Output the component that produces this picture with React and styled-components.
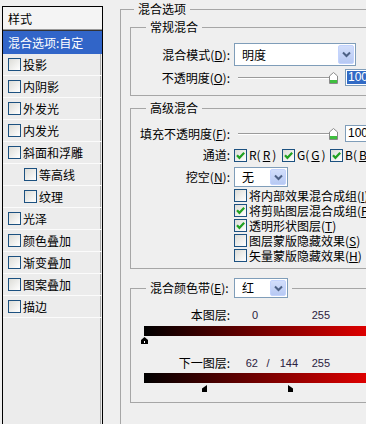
import styled, { createGlobalStyle } from 'styled-components';

const GlobalStyle = createGlobalStyle`
  html, body {
    margin: 0;
    padding: 0;
    overflow: hidden;
    background: #efefef;
  }
  body {
    font-family: "Noto Sans CJK SC", "Noto Sans", sans-serif;
    font-size: 12px;
    color: #000;
  }
  * { box-sizing: border-box; }
`;

const Page = styled.div`
  display: flex;
  align-items: flex-start;
  width: 366px;
  height: 424px;
  padding-left: 2px;
  overflow: hidden;
`;

/* ---------- left style list ---------- */

const Sidebar = styled.div`
  flex: none;
  width: 101px;
  height: 418px;
  margin-top: 6px;
  border: 1px solid #000;
  border-bottom: none;
  background: #ececec;
  box-shadow: inset -1px 0 0 #ececec, inset -2px 0 0 #a9a9a9;
  display: flex;
  flex-direction: column;
`;

const SidebarHeader = styled.div`
  height: 24px;
  padding-left: 5px;
  display: flex;
  align-items: center;
  background: #f4f4f4;
  border-bottom: 1px solid #333;
  box-shadow: inset 0 -1px 0 #9a9a9a;
  line-height: 14px;
`;

const SidebarSelected = styled.div`
  height: 23px;
  padding-left: 5px;
  display: flex;
  align-items: center;
  background: #3165c8;
  color: #fff;
  line-height: 14px;
`;

const SidebarRow = styled.div`
  height: 22px;
  padding-left: ${p => (p.$indent ? 21 : 5)}px;
  display: flex;
  align-items: center;
  gap: 2px;
  border-bottom: 1px solid #fbfbfb;
  line-height: 14px;
`;

/* ---------- shared controls ---------- */

const Box = styled.span`
  flex: none;
  width: 13px;
  height: 13px;
  border: 1px solid #1c5180;
  background: linear-gradient(135deg, #dcdcd7, #ffffff);
  display: flex;
  align-items: center;
  justify-content: center;
`;

function CheckBox({ checked }) {
  return (
    <Box>
      {checked && (
        <svg width="11" height="11" viewBox="0 0 11 11">
          <path d="M2 5.2 L4.4 7.8 L9.2 2.8" stroke="#21a121" strokeWidth="2.2" fill="none" />
        </svg>
      )}
    </Box>
  );
}

const Key = styled.span`
  text-decoration: underline;
`;

const SelectBox = styled.div`
  flex: none;
  width: ${p => p.$w}px;
  height: ${p => p.$h}px;
  border: 1px solid #7f9db9;
  background: #fff;
  display: flex;
  align-items: stretch;
`;

const SelectText = styled.span`
  flex: 1;
  padding-left: 7px;
  display: flex;
  align-items: center;
  line-height: 14px;
`;

const DropButton = styled.span`
  flex: none;
  width: 16px;
  margin: 1px;
  border: 1px solid #c3d3fd;
  border-radius: 2px;
  background: linear-gradient(#d2defb, #b7c9f3);
  display: flex;
  align-items: center;
  justify-content: center;
`;

function Select({ value, w, h }) {
  return (
    <SelectBox $w={w} $h={h}>
      <SelectText>{value}</SelectText>
      <DropButton>
        <svg width="9" height="7" viewBox="0 0 9 7">
          <path d="M1 1.5 L4.5 5 L8 1.5" stroke="#4d6185" strokeWidth="2" fill="none" />
        </svg>
      </DropButton>
    </SelectBox>
  );
}

const SliderWrap = styled.div`
  position: relative;
  flex: none;
  width: 107px;
  height: 16px;
  padding-left: 4px;
  display: flex;
  align-items: center;
`;

const Track = styled.span`
  width: 96px;
  height: 2px;
  border-top: 1px solid #9b9b9b;
  border-bottom: 1px solid #fff;
`;

const SliderThumb = styled.svg`
  position: absolute;
  top: 2px;
`;

const NumberInput = styled.div`
  flex: none;
  width: 40px;
  height: ${p => p.$h}px;
  margin-left: 4px;
  border: 1px solid #7f9db9;
  background: #fff;
  padding-left: 1px;
  display: flex;
  align-items: center;
  font-family: "Liberation Sans", Arial, sans-serif;
  font-size: 12px;
`;

const Highlight = styled.span`
  background: ${p => (p.$on ? '#316ac5' : 'transparent')};
  color: ${p => (p.$on ? '#fff' : '#000')};
  line-height: 13px;
  padding: 0 1px;
`;

function Slider({ value, selected, h }) {
  return (
    <Controls>
      <SliderWrap>
        <Track />
        <SliderThumb width="9" height="12" viewBox="0 0 9 12" style={{ left: 4 + value * 0.95 - 4 }}>
          <path d="M4.5 0.5 L8.5 4 V11.5 H0.5 V4 Z" fill="#fff" stroke="#8a8a8a" />
          <rect x="1" y="8" width="7" height="3" fill="#3fbf3f" />
        </SliderThumb>
      </SliderWrap>
      <NumberInput $h={h}>
        <Highlight $on={selected}>{value}</Highlight>
      </NumberInput>
    </Controls>
  );
}

/* ---------- group boxes ---------- */

const Main = styled.div`
  flex: none;
  width: 300px;
  margin-left: 17px;
`;

const Group = styled.fieldset`
  margin: ${p => p.$mt || 0}px 0 0 0;
  padding: ${p => p.$pad};
  border: 1px solid #a6a6a6;
  min-width: 0;
  width: ${p => p.$w || 'auto'};
`;

const Legend = styled.legend`
  margin-left: ${p => p.$indent}px;
  padding: 0 4px;
  line-height: ${p => p.$lh}px;
  font-size: 12px;
`;

const BandLegend = styled.legend`
  margin-left: 15px;
  padding: 0 4px;
  height: 20px;
  display: flex;
  align-items: center;
  gap: 4px;
`;

const LegendLabel = styled.span`
  width: 80px;
  line-height: 14px;
`;

const FormRow = styled.div`
  display: grid;
  grid-template-columns: 99px auto;
  column-gap: 4px;
  align-items: center;
  height: ${p => p.$h}px;
  margin-top: ${p => p.$mt}px;
`;

const Label = styled.span`
  text-align: right;
  white-space: nowrap;
  line-height: 14px;
`;

const Controls = styled.div`
  display: flex;
  align-items: center;
`;

const Channel = styled.span`
  width: 48px;
  display: flex;
  align-items: center;
  gap: 2px;
  line-height: 14px;
`;

const OptionList = styled.div`
  margin-top: 1px;
  padding-left: 103px;
  padding-bottom: 5px;
`;

const OptionRow = styled.div`
  height: 15px;
  display: flex;
  align-items: center;
  gap: 2px;
  white-space: nowrap;
  line-height: 14px;
`;

/* ---------- blend-if ---------- */

const ValueRow = styled.div`
  display: grid;
  grid-template-columns: 99px 28px 20px 20px 32px;
  align-items: center;
  height: 14px;
  margin-top: ${p => p.$mt}px;
`;

const Num = styled.span`
  text-align: ${p => p.$align || 'right'};
  font-family: "Liberation Sans", Arial, sans-serif;
  font-size: 11px;
  color: #2b2140;
  line-height: 14px;
`;

const Bar = styled.div`
  width: 256px;
  height: 10px;
  margin-left: 13px;
  margin-top: ${p => p.$mt}px;
  background: linear-gradient(to right, #000000, #ff0000);
`;

const ThumbTrack = styled.div`
  position: relative;
  width: 256px;
  height: 8px;
  margin-left: 13px;
  margin-top: ${p => p.$mt}px;
`;

const BandThumb = styled.svg`
  position: absolute;
  top: 0;
`;

function Thumb({ value, kind }) {
  if (kind === 'left') {
    return (
      <BandThumb width="5" height="7" viewBox="0 0 5 7" style={{ left: value - 4 }}>
        <path d="M5 0 V7 H0 V3.5 Z" fill="#000" />
      </BandThumb>
    );
  }
  if (kind === 'right') {
    return (
      <BandThumb width="5" height="7" viewBox="0 0 5 7" style={{ left: value }}>
        <path d="M0 0 L5 3.5 V7 H0 Z" fill="#000" />
      </BandThumb>
    );
  }
  return (
    <BandThumb width="7" height="7" viewBox="0 0 7 7" style={{ left: value - 3 }}>
      <path d="M3.5 0 L7 3 V7 H0 V3 Z" fill="#000" />
      <rect x="3" y="4" width="1" height="2" fill="#fff" />
    </BandThumb>
  );
}

const styleItems = [
  { label: '投影' },
  { label: '内阴影' },
  { label: '外发光' },
  { label: '内发光' },
  { label: '斜面和浮雕' },
  { label: '等高线', indent: true },
  { label: '纹理', indent: true },
  { label: '光泽' },
  { label: '颜色叠加' },
  { label: '渐变叠加' },
  { label: '图案叠加' },
  { label: '描边' },
];

const advancedOptions = [
  { text: '将内部效果混合成组', key: 'I', checked: false },
  { text: '将剪贴图层混合成组', key: 'P', checked: true },
  { text: '透明形状图层', key: 'T', checked: true },
  { text: '图层蒙版隐藏效果', key: 'S', checked: false },
  { text: '矢量蒙版隐藏效果', key: 'H', checked: false },
];

export default function App() {
  return (
    <>
      <GlobalStyle />
      <Page>
        <Sidebar>
          <SidebarHeader>样式</SidebarHeader>
          <SidebarSelected>混合选项:自定</SidebarSelected>
          {styleItems.map(item => (
            <SidebarRow key={item.label} $indent={item.indent}>
              <CheckBox />
              {item.label}
            </SidebarRow>
          ))}
        </Sidebar>

        <Main>
          <Group $pad="1px 0 40px 9px" $w="300px">
            <Legend $indent={4} $lh={18}>混合选项</Legend>

            <Group $pad="0 0 9px 0">
              <Legend $indent={15} $lh={16}>常规混合</Legend>
              <FormRow $h={23} $mt={8}>
                <Label>混合模式(<Key>D</Key>):</Label>
                <Select value="明度" w={122} h={23} />
              </FormRow>
              <FormRow $h={17} $mt={3}>
                <Label>不透明度(<Key>O</Key>):</Label>
                <Slider value={100} selected h={17} />
              </FormRow>
            </Group>

            <Group $pad="0 0 0 0" $mt={4}>
              <Legend $indent={15} $lh={16}>高级混合</Legend>
              <FormRow $h={17} $mt={9}>
                <Label>填充不透明度(<Key>F</Key>):</Label>
                <Slider value={100} h={17} />
              </FormRow>
              <FormRow $h={14} $mt={6}>
                <Label>通道:</Label>
                <Controls>
                  <Channel><CheckBox checked />R(<Key>R</Key>)</Channel>
                  <Channel><CheckBox checked />G(<Key>G</Key>)</Channel>
                  <Channel><CheckBox checked />B(<Key>B</Key>)</Channel>
                </Controls>
              </FormRow>
              <FormRow $h={20} $mt={5}>
                <Label>挖空(<Key>N</Key>):</Label>
                <Select value="无" w={54} h={20} />
              </FormRow>
              <OptionList>
                {advancedOptions.map(opt => (
                  <OptionRow key={opt.key}>
                    <CheckBox checked={opt.checked} />
                    <span>{opt.text}(<Key>{opt.key}</Key>)</span>
                  </OptionRow>
                ))}
              </OptionList>
            </Group>

            <Group $pad="0 0 9px 0" $mt={9}>
              <BandLegend>
                <LegendLabel>混合颜色带(<Key>E</Key>):</LegendLabel>
                <Select value="红" w={54} h={20} />
              </BandLegend>
              <ValueRow $mt={10}>
                <Label>本图层:</Label>
                <Num>0</Num>
                <span />
                <span />
                <Num>255</Num>
              </ValueRow>
              <Bar $mt={4} />
              <ThumbTrack $mt={1}>
                <Thumb value={0} />
              </ThumbTrack>
              <ValueRow $mt={11}>
                <Label>下一图层:</Label>
                <Num>62</Num>
                <Num $align="center">/</Num>
                <Num>144</Num>
                <Num>255</Num>
              </ValueRow>
              <Bar $mt={3} />
              <ThumbTrack $mt={2}>
                <Thumb value={62} kind="left" />
                <Thumb value={144} kind="right" />
              </ThumbTrack>
            </Group>
          </Group>
        </Main>
      </Page>
    </>
  );
}
